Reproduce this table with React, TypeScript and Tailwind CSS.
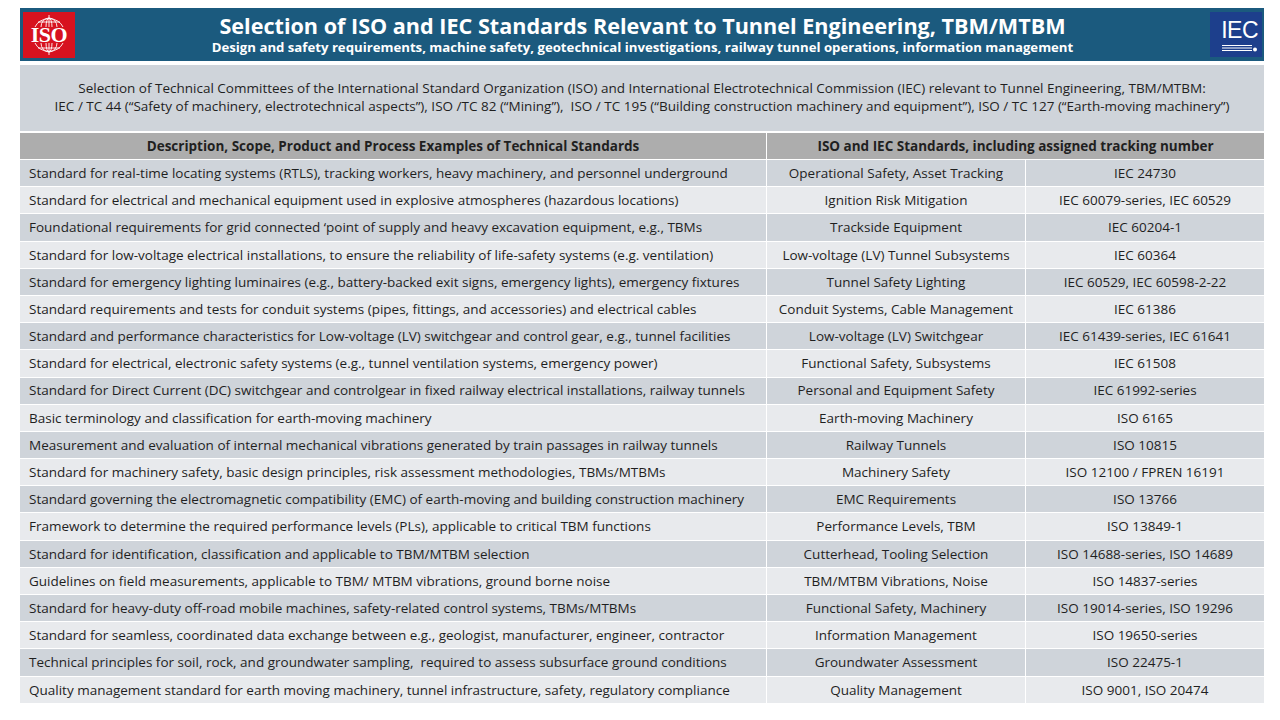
import React from "react";

type Row = { desc: string; area: string; std: string };

const rows: Row[] = [
  { desc: "Standard for real-time locating systems (RTLS), tracking workers, heavy machinery, and personnel underground", area: "Operational Safety, Asset Tracking", std: "IEC 24730" },
  { desc: "Standard for electrical and mechanical equipment used in explosive atmospheres (hazardous locations)", area: "Ignition Risk Mitigation", std: "IEC 60079-series, IEC 60529" },
  { desc: "Foundational requirements for grid connected \u2018point of supply and heavy excavation equipment, e.g., TBMs", area: "Trackside Equipment", std: "IEC 60204-1" },
  { desc: "Standard for low-voltage electrical installations, to ensure the reliability of life-safety systems (e.g. ventilation)", area: "Low-voltage (LV) Tunnel Subsystems", std: "IEC 60364" },
  { desc: "Standard for emergency lighting luminaires (e.g., battery-backed exit signs, emergency lights), emergency fixtures", area: "Tunnel Safety Lighting", std: "IEC 60529, IEC 60598-2-22" },
  { desc: "Standard requirements and tests for conduit systems (pipes, fittings, and accessories) and electrical cables", area: "Conduit Systems, Cable Management", std: "IEC 61386" },
  { desc: "Standard and performance characteristics for Low-voltage (LV) switchgear and control gear, e.g., tunnel facilities", area: "Low-voltage (LV) Switchgear", std: "IEC 61439-series, IEC 61641" },
  { desc: "Standard for electrical, electronic safety systems (e.g., tunnel ventilation systems, emergency power)", area: "Functional Safety, Subsystems", std: "IEC 61508" },
  { desc: "Standard for Direct Current (DC) switchgear and controlgear in fixed railway electrical installations, railway tunnels", area: "Personal and Equipment Safety", std: "IEC 61992-series" },
  { desc: "Basic terminology and classification for earth-moving machinery", area: "Earth-moving Machinery", std: "ISO 6165" },
  { desc: "Measurement and evaluation of internal mechanical vibrations generated by train passages in railway tunnels", area: "Railway Tunnels", std: "ISO 10815" },
  { desc: "Standard for machinery safety, basic design principles, risk assessment methodologies, TBMs/MTBMs", area: "Machinery Safety", std: "ISO 12100 / FPREN 16191" },
  { desc: "Standard governing the electromagnetic compatibility (EMC) of earth-moving and building construction machinery", area: "EMC Requirements", std: "ISO 13766" },
  { desc: "Framework to determine the required performance levels (PLs), applicable to critical TBM functions", area: "Performance Levels, TBM", std: "ISO 13849-1" },
  { desc: "Standard for identification, classification and applicable to TBM/MTBM selection", area: "Cutterhead, Tooling Selection", std: "ISO 14688-series, ISO 14689" },
  { desc: "Guidelines on field measurements, applicable to TBM/ MTBM vibrations, ground borne noise", area: "TBM/MTBM Vibrations, Noise", std: "ISO 14837-series" },
  { desc: "Standard for heavy-duty off-road mobile machines, safety-related control systems, TBMs/MTBMs", area: "Functional Safety, Machinery", std: "ISO 19014-series, ISO 19296" },
  { desc: "Standard for seamless, coordinated data exchange between e.g., geologist, manufacturer, engineer, contractor", area: "Information Management", std: "ISO 19650-series" },
  { desc: "Technical principles for soil, rock, and groundwater sampling,\u00a0 required to assess subsurface ground conditions", area: "Groundwater Assessment", std: "ISO 22475-1" },
  { desc: "Quality management standard for earth moving machinery, tunnel infrastructure, safety, regulatory compliance", area: "Quality Management", std: "ISO 9001, ISO 20474" },
];

const bandLine1 =
  "Selection of Technical Committees of the International Standard Organization (ISO) and International Electrotechnical Commission (IEC) relevant to Tunnel Engineering, TBM/MTBM:";
const bandLine2 =
  "IEC / TC 44 (\u201cSafety of machinery, electrotechnical aspects\u201d), ISO /TC 82 (\u201cMining\u201d),\u00a0 ISO / TC 195 (\u201cBuilding construction machinery and equipment\u201d), ISO / TC 127 (\u201cEarth-moving machinery\u201d)";

function IsoLogo() {
  return (
    <div className="relative flex h-[46px] w-[52px] items-center justify-center bg-[#d7121f]">
      <svg className="absolute inset-0" width="52" height="46" viewBox="0 0 52 46" fill="none" stroke="#ffffff" strokeWidth="0.9">
        <path d="M12 15 A15 13 0 0 1 40 15" />
        <path d="M18 15 A8 9 0 0 1 34 15" />
        <path d="M23 15 A3 9 0 0 1 29 15" />
        <path d="M26 3 V15" />
        <path d="M15 10 H37" />
        <path d="M12 31 A15 13 0 0 0 40 31" />
        <path d="M18 31 A8 9 0 0 0 34 31" />
        <path d="M23 31 A3 9 0 0 0 29 31" />
        <path d="M26 31 V43" />
        <path d="M15 36 H37" />
      </svg>
      <span className="relative font-['Liberation_Serif',serif] text-[22px] font-bold leading-none tracking-[-0.5px] text-white">ISO</span>
    </div>
  );
}

function IecLogo() {
  return (
    <div className="flex h-[45px] w-[52px] flex-col items-end justify-center bg-[#1d3f8c] pr-[4px] pt-[2px]">
      <span className="font-['Liberation_Sans_Narrow','Liberation_Sans',sans-serif] text-[23px] leading-none tracking-[-0.5px] text-white">IEC</span>
      <svg width="38" height="8" viewBox="0 0 38 8" className="mt-[2px]">
        <rect x="2" y="1" width="30" height="1" fill="#ffffff" />
        <rect x="2" y="3.5" width="30" height="1" fill="#ffffff" />
        <rect x="2" y="6" width="30" height="1" fill="#ffffff" />
        <circle cx="35" cy="5.5" r="2" fill="#ffffff" />
      </svg>
    </div>
  );
}

export default function App() {
  return (
    <div className="h-[720px] w-[1280px] overflow-hidden bg-white pl-[20px] pr-[16px] pt-[8px] font-['Open_Sans',sans-serif] text-[#1f1f1f]">
      {/* Title bar */}
      <div className="flex h-[53px] items-center justify-between bg-[#1b5a7e] pl-[3px] pr-[2px]">
        <IsoLogo />
        <div className="flex flex-col items-center whitespace-nowrap text-white">
          <div className="text-[21.6px] font-bold leading-[26px]">
            Selection of ISO and IEC Standards Relevant to Tunnel Engineering, TBM/MTBM
          </div>
          <div className="text-[13.2px] font-bold leading-[17px]">
            Design and safety requirements, machine safety, geotechnical investigations, railway tunnel operations, information management
          </div>
        </div>
        <IecLogo />
      </div>

      {/* Committees band */}
      <div className="mt-[4px] flex h-[66px] flex-col items-center justify-center whitespace-nowrap bg-[#cfd4da] pb-[3px] text-center text-[13.5px] leading-[18px]">
        <div>{bandLine1}</div>
        <div>{bandLine2}</div>
      </div>

      {/* Table */}
      <div className="mt-[2px] text-[13.5px]">
        <div className="grid h-[26px] grid-cols-[746px_498px] items-stretch bg-[#adadad] font-bold">
          <div className="flex items-center justify-center whitespace-nowrap">Description, Scope, Product and Process Examples of Technical Standards</div>
          <div className="flex items-center justify-center whitespace-nowrap border-l border-white">ISO and IEC Standards, including assigned tracking number</div>
        </div>
        {rows.map((r, i) => (
          <div
            key={i}
            className={`grid h-[27.2px] grid-cols-[746px_259px_239px] border-t border-white ${i % 2 === 0 ? "bg-[#cfd4da]" : "bg-[#e8eaed]"}`}
          >
            <div className="flex items-center whitespace-nowrap pl-[9px]">{r.desc}</div>
            <div className="flex items-center justify-center whitespace-nowrap border-l border-white">{r.area}</div>
            <div className="flex items-center justify-center whitespace-nowrap border-l border-white">{r.std}</div>
          </div>
        ))}
      </div>
    </div>
  );
}
